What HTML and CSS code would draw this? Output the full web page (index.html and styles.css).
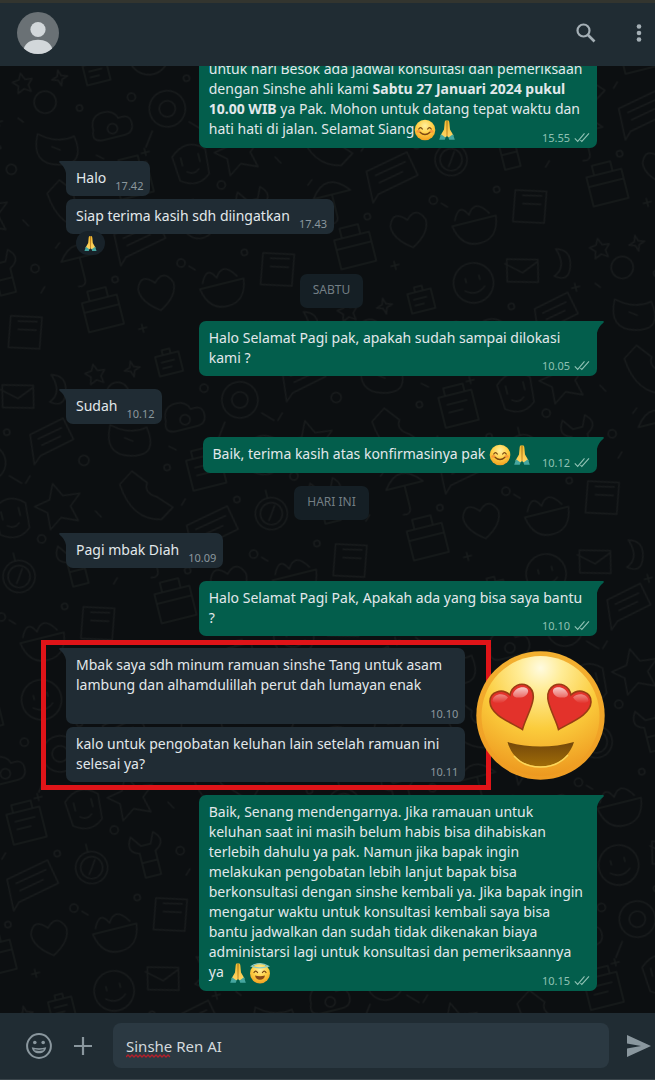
FILE: index.html
```html
<!DOCTYPE html>
<html lang="id">
<head>
<meta charset="utf-8">
<meta name="viewport" content="width=device-width, initial-scale=1">
<title>Chat</title>
<link rel="stylesheet" href="styles.css">
</head>
<body>
<svg class="defs" aria-hidden="true">
  <defs>
    <radialGradient id="face" cx=".5" cy=".3" r=".75"><stop offset="0" stop-color="#fff0a0"/><stop offset=".5" stop-color="#ffd045"/><stop offset="1" stop-color="#ef9a1c"/></radialGradient>
    <linearGradient id="skin" x1="0" y1="0" x2="0" y2="1"><stop offset="0" stop-color="#f5b92c"/><stop offset="1" stop-color="#ffd86a"/></linearGradient>
    <symbol id="smile" viewBox="0 0 22 22">
      <circle cx="11" cy="11" r="10.3" fill="url(#face)"/>
      <path d="M4.8 10q1.7-2.6 3.500 0M13.700 10q1.800-2.600 3.500 0M6 13.200q5 4.600 10 0" fill="none" stroke="#7a4713" stroke-width="1.300" stroke-linecap="round"/>
      <ellipse cx="4.500" cy="12.400" rx="2" ry="1.400" fill="#f47b36" opacity=".6"/><ellipse cx="17.500" cy="12.400" rx="2" ry="1.400" fill="#f47b36" opacity=".6"/>
    </symbol>
    <symbol id="halo" viewBox="0 0 22 22">
      <circle cx="11" cy="11.500" r="10" fill="url(#face)"/>
      <path d="M5 10.500q1.700-2.600 3.500 0M13.500 10.500q1.800-2.600 3.500 0" fill="none" stroke="#7a4713" stroke-width="1.300" stroke-linecap="round"/>
      <path d="M6 13.500q5 1.500 10 0-1 4.300-5 4.300T6 13.500z" fill="#8a4a17"/>
      <path d="M2.500 4.200Q11-1 19.500 4.200 11 7.500 2.500 4.200z" fill="none" stroke="#8fcbc4" stroke-width="1.300"/>
    </symbol>
    <symbol id="pray" viewBox="0 0 22 22">
      <path d="M10.800 1.500C9.400 1 8.800 2 8.600 4L8 10.500 4.500 16.500 8 19.500 11 17z" fill="url(#skin)"/>
      <path d="M11.200 1.500C12.600 1 13.200 2 13.400 4L14 10.500 17.500 16.500 14 19.500 11 17z" fill="url(#skin)"/>
      <path d="M11 2v15" stroke="#c8821a" stroke-width=".9"/>
      <path d="M5 15.200 9.600 18.400 8.800 20.700H3.200zM17 15.200 12.400 18.400 13.200 20.700H18.800z" fill="#45a6a0"/>
    </symbol>
    <symbol id="ticks" viewBox="0 0 16 11"><path d="M.8 6.300 3.700 9.400 10.500 1.300M6.400 8.200 7.800 9.400 15 1.300" fill="none" stroke="currentColor" stroke-width="1.100"/></symbol>
    <symbol id="tail" viewBox="0 0 8 12"><path d="M8 0H1.200C0 0-.200 .8 .600 1.700Q6 6 7 12H8z" fill="currentColor"/></symbol>
  </defs>
</svg>

<div class="app">
  <header class="topbar">
    <svg class="avatar" viewBox="0 0 42 42" role="img" aria-label="Foto profil">
      <circle cx="21" cy="21" r="21" fill="#6a7175"/>
      <circle cx="21" cy="17.500" r="7.600" fill="#d2d7da"/>
      <path d="M6.800 36.400C9 30.500 14 27.800 21 27.800S33 30.500 35.200 36.400A21 21 0 0 1 6.800 36.400z" fill="#d2d7da"/>
    </svg>
    <button class="icon-button search" aria-label="Cari">
      <svg viewBox="0 0 24 24" width="24" height="24"><circle cx="9.500" cy="9.500" r="6" fill="none" stroke="currentColor" stroke-width="2.200"/><path d="M14 14 20.500 20.500" stroke="currentColor" stroke-width="2.600"/></svg>
    </button>
    <button class="icon-button" aria-label="Menu">
      <svg viewBox="0 0 24 24" width="24" height="24" fill="currentColor"><circle cx="12" cy="5.500" r="2.300"/><circle cx="12" cy="12" r="2.300"/><circle cx="12" cy="18.500" r="2.300"/></svg>
    </button>
  </header>

  <main class="chat">
    <svg class="wallpaper" aria-hidden="true">
      <defs>
        <pattern id="doodles" width="260" height="300" patternUnits="userSpaceOnUse" patternTransform="rotate(-14)">
          <g fill="none" stroke="#181b1c" stroke-width="1.500" stroke-linecap="round" stroke-linejoin="round">
            <path d="M18 12l3 7 7 1-5 5 1 7-6-4-7 3 2-7-5-5 7-1z"/>
            <circle cx="35" cy="46" r="11"/><path d="M55 18l2 6 6 2-6 2-2 6-2-6-6-2 6-2z"/>
            <path d="M80 20h24v20H80zM88 20v-5h8v5M85 27h13M85 33h9"/>
            <circle cx="147" cy="25" r="20"/><path d="M137 31q10 8 20 0M140 19v4M154 19v4"/>
            <path d="M185 10l30 8-5 22-30-8zM182 14l15 13 17-7"/>
            <path d="M235 12q15 4 10 20t-18 6q15-6 8-26z"/>
            <path d="M75 85q0-14 12-15t15 9q12-2 12 8t-10 10H82q-12-1-7-12z"/><circle cx="94" cy="88" r="5"/>
            <circle cx="152" cy="82" r="18"/><circle cx="152" cy="82" r="8"/><path d="M132 100l-10 14M170 100l10 10"/>
            <path d="M20 75q-14 28 13 35t22-24q-18 4-35-11zM31 91l7 5"/>
            <path d="M200 65l36-8 5 23-36 8-8 7zM207 71l25-5M209 78l20-4"/>
            <path d="M15 135l15-10 12 15q-6 9 6 16l13 14-14 9Q18 173 15 135z"/>
            <path d="M85 128h34v31H85zM92 128v-8h20v8M92 137h20M92 145h14"/>
            <path d="M145 130q18-16 34 0l-2 25q-14 12-30 0zM153 133v8M171 133v8M156 148q6 5 12 0"/>
            <path d="M210 118l7 14 17 2-12 10 4 16-16-7-13 9 1-17-11-9 16-3z"/>
            <path d="M12 205q18-25 38 0H12zM31 205v22q0 8-8 6"/>
            <path d="M70 191l44-9 5 25-43 9-7 7zM78 197l32-6M80 205l25-5"/>
            <circle cx="155" cy="200" r="16"/><circle cx="155" cy="200" r="11"/><path d="M155 184v-8M160 193l-6 9-3 4"/>
            <path d="M200 180q-9 14 5 18v25h16v-24q14-8 2-19l-5 11h-10zM205 208h15"/>
            <path d="M22 250h36v30H22zM22 260h36M30 250v-10h19v10"/>
            <path d="M80 250q6-16 18-2 12-12 18 4 0 14-19 24-18-13-17-26z"/>
            <path d="M140 265h45q-3 23-22 23t-23-23zM144 260q8-17 15-2 9-15 20 3"/>
            <path d="M210 245l30 9-10 30-30-9zM216 252l18 5M214 260l17 5"/>
            <circle cx="67" cy="60" r="3"/><circle cx="120" cy="62" r="4"/><circle cx="178" cy="57" r="3"/><circle cx="246" cy="103" r="5"/><circle cx="65" cy="130" r="3"/><circle cx="125" cy="178" r="3"/><circle cx="186" cy="169" r="4"/><circle cx="60" cy="235" r="3"/><circle cx="128" cy="235" r="4"/><circle cx="192" cy="240" r="3"/><circle cx="245" cy="205" r="4"/>
            <path d="M5 55l4 5M72 110l6 5M190 105l-6 6M245 155l4 7M70 170l5-5M135 240l5 5M245 230l5-5M10 190l5-4M120 115v7M116 119h8M245 50v8M241 54h8M75 285v8M71 289h8"/>
          </g>
        </pattern>
      </defs>
      <rect width="100%" height="100%" fill="url(#doodles)"/>
    </svg>

    <div class="thread">
      <article class="bubble out wide">
        <p>untuk hari Besok ada jadwal konsultasi dan pemeriksaan<br>dengan Sinshe ahli kami <b>Sabtu 27 Januari 2024 pukul</b><br><b>10.00 WIB</b> ya Pak. Mohon untuk datang tepat waktu dan<br>hati hati di jalan. Selamat Siang<svg class="emoji"><use href="#smile"/></svg><svg class="emoji"><use href="#pray"/></svg></p>
        <footer><time>15.55</time><svg class="ticks"><use href="#ticks"/></svg></footer>
      </article>

      <article class="bubble in tailed turn"><svg class="tail"><use href="#tail"/></svg><p>Halo</p><footer><time>17.42</time></footer></article>
      <article class="bubble in"><p>Siap terima kasih sdh diingatkan</p><footer><time>17.43</time></footer>
        <span class="reaction"><svg><use href="#pray"/></svg></span>
      </article>

      <div class="date after-reaction">SABTU</div>

      <article class="bubble out tailed wide turn"><svg class="tail"><use href="#tail"/></svg><p>Halo Selamat Pagi pak, apakah sudah sampai dilokasi<br>kami ?</p><footer><time>10.05</time><svg class="ticks"><use href="#ticks"/></svg></footer></article>

      <article class="bubble in tailed turn"><svg class="tail"><use href="#tail"/></svg><p>Sudah</p><footer><time>10.12</time></footer></article>

      <article class="bubble out tailed turn"><svg class="tail"><use href="#tail"/></svg><p>Baik, terima kasih atas konfirmasinya pak <svg class="emoji"><use href="#smile"/></svg><svg class="emoji"><use href="#pray"/></svg></p><footer><time>10.12</time><svg class="ticks"><use href="#ticks"/></svg></footer></article>

      <div class="date turn">HARI INI</div>

      <article class="bubble in tailed turn"><svg class="tail"><use href="#tail"/></svg><p>Pagi mbak Diah</p><footer><time>10.09</time></footer></article>

      <article class="bubble out tailed wide turn"><svg class="tail"><use href="#tail"/></svg><p>Halo Selamat Pagi Pak, Apakah ada yang bisa saya bantu<br>?</p><footer><time>10.10</time><svg class="ticks"><use href="#ticks"/></svg></footer></article>

      <section class="highlight">
        <article class="bubble in tailed wide"><svg class="tail"><use href="#tail"/></svg><p class="spaced">Mbak saya sdh minum ramuan sinshe Tang untuk asam<br>lambung dan alhamdulillah perut dah lumayan enak</p><footer><time>10.10</time></footer></article>
        <article class="bubble in wide"><p>kalo untuk pengobatan keluhan lain setelah ramuan ini<br>selesai ya?</p><footer><time>10.11</time></footer></article>
        <svg class="sticker" viewBox="0 0 129 129" role="img" aria-label="Wajah dengan mata hati">
          <defs>
            <linearGradient id="rim" x1="0" y1="0" x2="0" y2="1"><stop offset="0" stop-color="#f3b030"/><stop offset="1" stop-color="#ef9c22"/></linearGradient>
            <radialGradient id="glow" cx=".5" cy=".1" r=".92"><stop offset="0" stop-color="#fffbe0"/><stop offset=".2" stop-color="#ffec96"/><stop offset=".55" stop-color="#fbcc3c"/><stop offset=".85" stop-color="#f2a828"/><stop offset="1" stop-color="#ec961e"/></radialGradient>
            <linearGradient id="shine" x1="0" y1="0" x2="0" y2="1"><stop offset="0" stop-color="#fff" stop-opacity=".75"/><stop offset="1" stop-color="#fff" stop-opacity="0"/></linearGradient>
            <linearGradient id="mouth" x1="0" y1="0" x2="0" y2="1"><stop offset="0" stop-color="#74480a"/><stop offset="1" stop-color="#a06c08"/></linearGradient>
          </defs>
          <circle cx="64.500" cy="64.500" r="64.200" fill="url(#rim)"/>
          <ellipse cx="64.500" cy="65" rx="59" ry="60" fill="url(#glow)"/>
          <g stroke="#9a3c14" stroke-width="1.600" fill="#e3322b">
            <path d="M46.500 78.500C34 71 14.500 64 14 51C13.500 41 26 36.500 34 44C36 34 45 31.500 51 34.500C66 43 50 64 46.500 78.500z"/>
            <path d="M82.500 78.500C95 71 114.500 64 115 51C115.500 41 103 36.500 95 44C93 34 84 31.500 78 34.500C63 43 79 64 82.500 78.500z"/>
          </g>
          <path d="M16.500 50C17 43 27 41 32 46.500C28 53 20 54 16.500 50zM37 43C39 36.500 47 34.500 51 37.500C54 40 51 46 45 46.500C40 47 37 46 37 43zM112.500 50C112 43 102 41 97 46.500C101 53 109 54 112.500 50zM92 43C90 36.500 82 34.500 78 37.500C75 40 78 46 84 46.500C89 47 92 46 92 43z" fill="url(#shine)"/>
          <path d="M31.500 91Q64.500 100 98 91C93 107 80 115.500 64.500 115.500S36 107 31.500 91z" fill="url(#mouth)"/>
          <path d="M38 105C45 113 53 116 64.500 116S85 112 92 104" fill="none" stroke="#fbd75a" stroke-width="1.500"/>
        </svg>
      </section>

      <article class="bubble out tailed wide"><svg class="tail"><use href="#tail"/></svg><p>Baik, Senang mendengarnya. Jika ramauan untuk<br>keluhan saat ini masih belum habis bisa dihabiskan<br>terlebih dahulu ya pak. Namun jika bapak ingin<br>melakukan pengobatan lebih lanjut bapak bisa<br>berkonsultasi dengan sinshe kembali ya. Jika bapak ingin<br>mengatur waktu untuk konsultasi kembali saya bisa<br>bantu jadwalkan dan sudah tidak dikenakan biaya<br>administarsi lagi untuk konsultasi dan pemeriksaannya<br>ya <svg class="emoji"><use href="#pray"/></svg><svg class="emoji"><use href="#halo"/></svg></p><footer><time>10.15</time><svg class="ticks"><use href="#ticks"/></svg></footer></article>
    </div>
  </main>

  <form class="composer">
    <button type="button" class="icon-button" aria-label="Emoji">
      <svg viewBox="0 0 28 28" width="28" height="28"><circle cx="14" cy="14" r="11.900" fill="none" stroke="currentColor" stroke-width="2"/><circle cx="9.800" cy="10.500" r="1.800" fill="currentColor"/><circle cx="18.200" cy="10.500" r="1.800" fill="currentColor"/><path d="M6.800 15.300Q14 17.300 21.200 15.300C20.500 19.300 17.800 21.300 14 21.300S7.500 19.300 6.800 15.300z" fill="currentColor"/><path d="M9.500 17.800Q14 19 18.500 17.800" fill="none" stroke="#202c33" stroke-width="1"/></svg>
    </button>
    <button type="button" class="icon-button plus" aria-label="Lampirkan">
      <svg viewBox="0 0 20 20" width="20" height="20"><path d="M10 1v18M1 10h18" stroke="currentColor" stroke-width="2.200"/></svg>
    </button>
    <div class="field">
      <input type="text" aria-label="Ketik pesan" value="Sinshe Ren AI" spellcheck="false">
      <svg class="squiggle" viewBox="0 0 45 4" aria-hidden="true"><path d="M0 3l2-2 2 2 2-2 2 2 2-2 2 2 2-2 2 2 2-2 2 2 2-2 2 2 2-2 2 2 2-2 2 2 2-2 2 2 2-2 2 2 2-2 2 2" fill="none" stroke="#b3202b" stroke-width="1.300"/></svg>
    </div>
    <button type="button" class="icon-button send" aria-label="Kirim">
      <svg viewBox="0 0 24 22" width="24" height="22"><path d="M0 0 24 11 0 22V13.500L14 11 0 8.500z" fill="currentColor"/></svg>
    </button>
  </form>
</div>
</body>
</html>
```
FILE: styles.css
```css
* {
  box-sizing: border-box;
}

body {
  margin: 0;
  background: #0c0f11;
  color: #e2e8eb;
  font: 14px/20px "Noto Sans", "Open Sans", sans-serif;
}

p {
  margin: 0;
}

.defs {
  position: absolute;
  width: 0;
  height: 0;
}

.app {
  display: flex;
  flex-direction: column;
  height: 100vh;
}

.topbar {
  display: flex;
  align-items: center;
  flex: none;
  height: 66px;
  padding: 0 4px 3px 17px;
  border-top: 3px solid #33352f;
  background: #202c33;
}

.avatar {
  width: 42px;
  height: 42px;
  margin-right: auto;
}

.icon-button {
  display: flex;
  padding: 0;
  border: 0;
  background: none;
  color: #a4afb5;
}

.search {
  margin-right: 29px;
}

.chat {
  position: relative;
  flex: 1;
  min-height: 0;
  overflow: hidden;
}

.wallpaper {
  position: absolute;
  inset: 0;
  width: 100%;
  height: 100%;
}

.thread {
  position: relative;
  display: flex;
  flex-direction: column;
  justify-content: flex-end;
  align-items: flex-start;
  height: 100%;
  padding: 0 58px 22px 66px;
}

.bubble {
  position: relative;
  display: flex;
  flex: none;
  gap: 9px;
  padding: 7px 7px 8px 10px;
  border-radius: 7px;
  white-space: nowrap;
}

.in {
  margin-top: 3px;
  background: #202c34;
  --tail: #202c34;
}

.out {
  align-self: flex-end;
  background: #035e4c;
  --tail: #035e4c;
}

.in.tailed {
  border-top-left-radius: 0;
}

.out.tailed {
  border-top-right-radius: 0;
}

.wide {
  display: grid;
  width: 75%;
}

.wide > p,
.wide > footer {
  grid-area: 1 / 1;
}

.turn {
  margin-top: 13px;
}

.spaced {
  padding-bottom: 21px;
}

.bubble footer {
  display: flex;
  align-items: center;
  align-self: end;
  justify-self: end;
  gap: 4px;
  margin-bottom: -5px;
  color: #8b979d;
  font-size: 11px;
  line-height: 15px;
}

.out footer {
  color: #8fc1b3;
}

.ticks {
  width: 16px;
  height: 11px;
}

.tail {
  position: absolute;
  top: 0;
  width: 8px;
  height: 12px;
  color: var(--tail);
}

.in .tail {
  left: -7px;
}

.out .tail {
  right: -7px;
  transform: scaleX(-1);
}

.emoji {
  width: 22px;
  height: 22px;
  margin: -1px 0;
  vertical-align: -6px;
}

.reaction {
  position: absolute;
  top: 32px;
  left: 10px;
  display: flex;
  align-items: center;
  justify-content: center;
  width: 29px;
  height: 24px;
  border-radius: 12px;
  background: #182229;
}

.reaction svg {
  width: 17px;
  height: 17px;
}

.date {
  align-self: center;
  flex: none;
  padding: 6px 13px 8px;
  border-radius: 7px;
  background: #151f25;
  color: #737e84;
  font-size: 12px;
}

.after-reaction {
  margin-top: 40px;
}

.highlight {
  position: relative;
  flex: none;
  width: calc(75% + 52px);
  margin: 4px 0 5px -25px;
  padding: 0 21px 3px 20px;
  border: 5px solid #df1418;
}

.highlight .wide {
  width: 100%;
}

.sticker {
  position: absolute;
  top: 6px;
  left: calc(100% - 10px);
  width: 129px;
  height: 129px;
}

.composer {
  display: flex;
  align-items: center;
  flex: none;
  height: 67px;
  padding: 0 4px 1px 25px;
  border-bottom: 1px solid #3a454b;
  background: #202c33;
}

.composer .icon-button {
  color: #8a979e;
}

.composer .plus {
  margin: 0 20px;
}

.field {
  position: relative;
  flex: 1;
  min-width: 0;
}

.field input {
  display: block;
  width: 100%;
  height: 45px;
  padding: 0 13px;
  border: 0;
  border-radius: 8px;
  background: #2b3942;
  color: #d4dadd;
  font: inherit;
  font-size: 15px;
}

.squiggle {
  position: absolute;
  bottom: 10px;
  left: 13px;
  width: 45px;
  height: 4px;
}

.composer .send {
  margin-left: 18px;
}
```
